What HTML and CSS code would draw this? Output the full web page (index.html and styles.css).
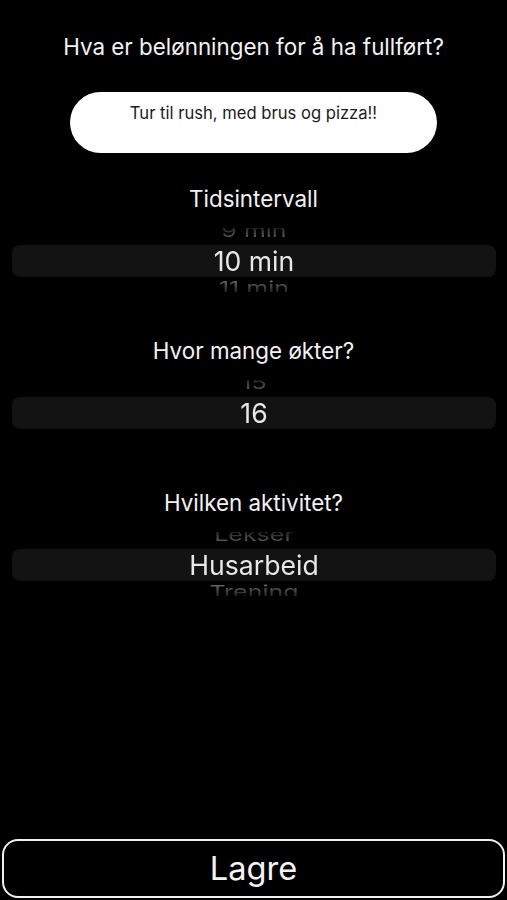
FILE: index.html
```html
<!DOCTYPE html>
<html lang="no">
<head>
<meta charset="utf-8">
<title>Belønning</title>
<link rel="stylesheet" href="styles.css">
</head>
<body>
<main class="screen">
  <h1 class="title">Hva er belønningen for å ha fullført?</h1>
  <div class="reward-input">Tur til rush, med brus og pizza!!</div>

  <section class="section">
    <h2 class="label">Tidsintervall</h2>
    <div class="picker">
      <div class="opt opt-prev">9 min</div>
      <div class="band">10 min</div>
      <div class="opt opt-next">11 min</div>
    </div>
  </section>

  <section class="section">
    <h2 class="label">Hvor mange økter?</h2>
    <div class="picker">
      <div class="opt opt-prev">15</div>
      <div class="band">16</div>
      <div class="opt opt-next"></div>
    </div>
  </section>

  <section class="section">
    <h2 class="label">Hvilken aktivitet?</h2>
    <div class="picker">
      <div class="opt opt-prev">Lekser</div>
      <div class="band">Husarbeid</div>
      <div class="opt opt-next">Trening</div>
    </div>
  </section>

  <button class="save">Lagre</button>
</main>
</body>
</html>
```

FILE: styles.css
```css
* { box-sizing: border-box; }
html, body {
  margin: 0;
  padding: 0;
  background: #000;
}
body {
  font-family: Inter, "Noto Sans", "Liberation Sans", sans-serif;
  color: #f2f2f2;
}
.screen {
  min-height: 900px;
  display: flex;
  flex-direction: column;
  align-items: center;
  padding-top: 34px;
}
.title {
  margin: 0;
  font-size: 22.4px;
  font-weight: 400;
  line-height: 26px;
  text-align: center;
  white-space: nowrap;
}
.reward-input {
  margin-top: 32px;
  width: 367px;
  height: 61px;
  border-radius: 31px;
  background: #fff;
  color: #1c1c1c;
  font-size: 16.6px;
  line-height: 20px;
  text-align: center;
  padding-top: 11px;
}
.section {
  width: 100%;
  display: flex;
  flex-direction: column;
  align-items: center;
}
.section:nth-of-type(1) { margin-top: 33px; }
.section + .section { margin-top: 46px; }
.label {
  margin: 0;
  font-size: 22.4px;
  font-weight: 400;
  line-height: 26px;
  text-align: center;
}
.picker {
  margin-top: 16px;
  width: 100%;
  height: 64px;
  overflow: hidden;
  padding: 0 11px 0 12px;
  display: flex;
  flex-direction: column;
  -webkit-mask-image: linear-gradient(to bottom, rgba(0,0,0,0.25) 0%, #000 30%, #000 72%, rgba(0,0,0,0.25) 100%);
  mask-image: linear-gradient(to bottom, rgba(0,0,0,0.25) 0%, #000 30%, #000 72%, rgba(0,0,0,0.25) 100%);
}
.band {
  flex: none;
  height: 32px;
  border-radius: 8px;
  background: #131313;
  color: #e8e8e8;
  font-size: 26.6px;
  line-height: 32px;
  text-align: center;
}
.opt {
  flex: none;
  height: 28px;
  font-size: 25px;
  line-height: 28px;
  text-align: center;
  color: #8c8c8c;
  transform: scaleY(0.7);
}
.opt-prev { margin-top: -11px; }
.opt-next { margin-top: -3px; }
.save {
  margin-top: auto;
  margin-bottom: 2px;
  width: 503px;
  height: 59px;
  border: 2px solid #f0f0f0;
  border-radius: 16px;
  background: #000;
  color: #f4f4f4;
  font-family: Inter, "Noto Sans", "Liberation Sans", sans-serif;
  font-size: 32.6px;
  line-height: 1;
  padding: 0;
}
```
